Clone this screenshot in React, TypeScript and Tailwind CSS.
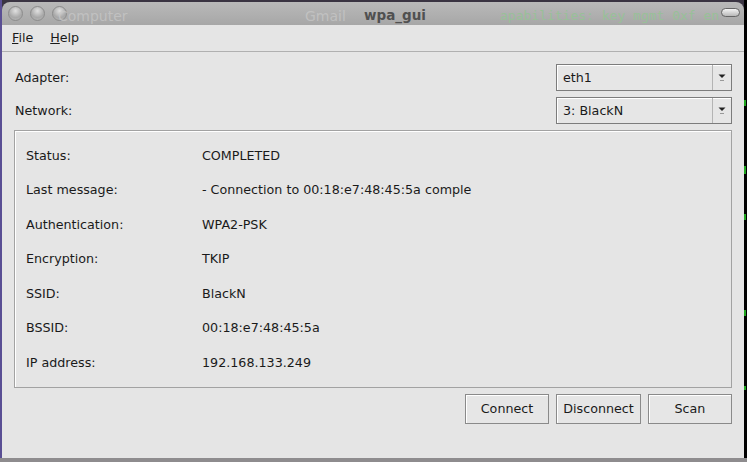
import React from 'react';

const rows: [string, string][] = [
  ['Status:', 'COMPLETED'],
  ['Last message:', '- Connection to 00:18:e7:48:45:5a comple'],
  ['Authentication:', 'WPA2-PSK'],
  ['Encryption:', 'TKIP'],
  ['SSID:', 'BlackN'],
  ['BSSID:', '00:18:e7:48:45:5a'],
  ['IP address:', '192.168.133.249'],
];

function TrafficDot() {
  return (
    <div className="h-[15px] w-[15px] rounded-full border border-[#8c8c8c] bg-[radial-gradient(circle_at_50%_30%,#e0e0e0,#a8a8a8_60%,#bcbcbc)]" />
  );
}

function Combo({ value }: { value: string }) {
  return (
    <div className="flex h-[27px] w-[176px] border border-[#7c7c7c] bg-[#e6e6e6] shadow-[inset_1px_1px_0_#ffffff]">
      <div className="flex flex-1 items-center pl-[6px]">{value}</div>
      <div className="flex w-[19px] flex-col items-center justify-center border-l border-[#b4b4b4]">
        <svg width="8" height="9" viewBox="0 0 8 9">
          <path d="M0.5 1.5h7L4 5z" fill="#222" />
          <path d="M2 7.5h4" stroke="#999" strokeWidth="1" />
        </svg>
      </div>
    </div>
  );
}

function Btn({ label, w }: { label: string; w: string }) {
  return (
    <button
      className={`flex h-[30px] ${w} items-center justify-center border border-[#8a8a8a] bg-[#e6e6e6] shadow-[inset_1px_1px_0_#ffffff]`}
    >
      {label}
    </button>
  );
}

export default function App() {
  return (
    <div
      className="flex h-[462px] w-[747px] flex-col overflow-hidden bg-[#3a3442] text-[12.7px] text-[#1a1a1a]"
      style={{ fontFamily: '"DejaVu Sans", Verdana, sans-serif' }}
    >
      <div className="flex flex-1">
        <div className="w-[2px] bg-[#5a4f94]" />
        <div className="mt-[2px] flex w-[742px] flex-col">
          {/* title bar */}
          <div className="relative flex h-[23px] items-center whitespace-nowrap rounded-t-[8px] bg-[linear-gradient(#b9b9b9,#a7a7a7)] px-[6px]">
            <div className="flex gap-[7px]">
              <TrafficDot />
              <TrafficDot />
              <TrafficDot />
            </div>
            <span className="absolute left-[56px] top-[4px] text-[14px] text-[#c9c9c9]/70">Computer</span>
            <span className="absolute left-[303px] top-[4px] text-[14px] text-[#c9c9c9]/70">Gmail</span>
            <span
              className="absolute left-[498px] top-[4px] text-[13px] text-[#98c098]"
              style={{ fontFamily: '"DejaVu Sans Mono", monospace' }}
            >
              apabilities: key mgmt 0xf en
            </span>
            <span className="absolute left-[362px] top-[3px] text-[13.5px] font-bold text-[#505050]">wpa_gui</span>
            <div className="absolute right-[4px] top-[6px] h-[9px] w-[19px] rounded-full border border-[#666] bg-[linear-gradient(#f4f4f4,#b8b8b8)]" />
          </div>

          {/* window body */}
          <div className="flex flex-1 flex-col bg-[#e5e5e5]">
            <div className="flex h-[27px] items-center gap-[17px] border-b border-[#b0b0b0] pl-[10px]">
              <span>
                <span className="underline">F</span>ile
              </span>
              <span>
                <span className="underline">H</span>elp
              </span>
            </div>

            <div className="flex flex-col px-[12px] pt-[12px]">
              <div className="flex items-center justify-between">
                <span className="pl-[1px]">Adapter:</span>
                <Combo value="eth1" />
              </div>
              <div className="mt-[6px] flex items-center justify-between">
                <span className="pl-[1px]">Network:</span>
                <Combo value="3: BlackN" />
              </div>

              <div className="mt-[6px] flex flex-col border border-[#a2a2a2] pb-[7px] pl-[11px] pt-[7px] shadow-[inset_1px_1px_0_#ffffff]">
                {rows.map(([k, v]) => (
                  <div key={k} className="flex h-[34.5px] items-center">
                    <span className="w-[176px]">{k}</span>
                    <span>{v}</span>
                  </div>
                ))}
              </div>

              <div className="mt-[6px] flex justify-end gap-[7px]">
                <Btn label="Connect" w="w-[84px]" />
                <Btn label="Disconnect" w="w-[85px]" />
                <Btn label="Scan" w="w-[84px]" />
              </div>
            </div>
          </div>
        </div>
        <div className="flex w-[3px] flex-col bg-black">
          <div className="mt-[100px] h-[6px] w-[2px] bg-[#1fa51f]" />
          <div className="mt-[60px] h-[8px] w-[2px] bg-[#1fa51f]" />
          <div className="mt-[40px] h-[6px] w-[2px] bg-[#1fa51f]" />
          <div className="mt-[90px] h-[6px] w-[2px] bg-[#1fa51f]" />
          <div className="mt-[70px] h-[4px] w-[2px] bg-[#1fa51f]" />
        </div>
      </div>
      <div className="h-[4px] bg-[#8e8c8e]" />
    </div>
  );
}
